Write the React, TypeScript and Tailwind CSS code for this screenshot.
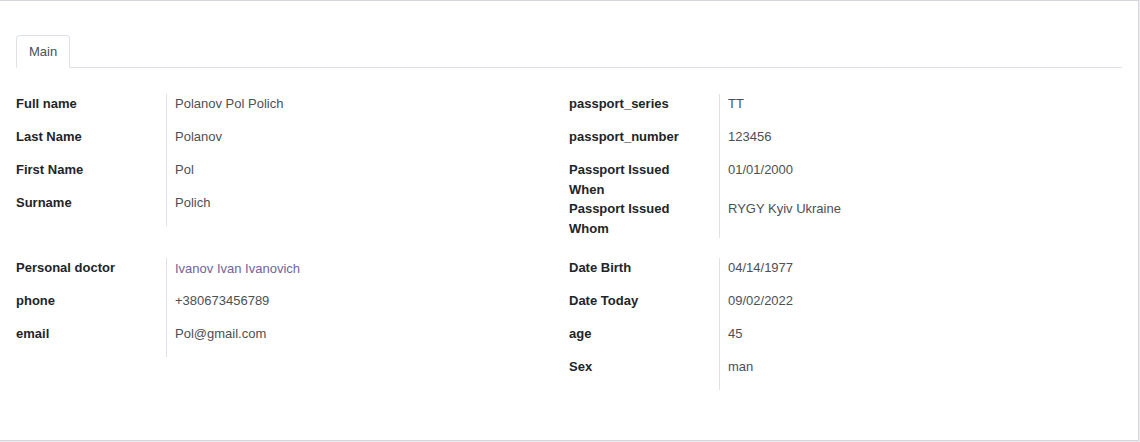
import type { ReactNode } from "react";

type Field = {
  label: string;
  value: ReactNode;
  link?: boolean;
};

const leftTop: Field[] = [
  { label: "Full name", value: "Polanov Pol Polich" },
  { label: "Last Name", value: "Polanov" },
  { label: "First Name", value: "Pol" },
  { label: "Surname", value: "Polich" },
];

const rightTop: Field[] = [
  { label: "passport_series", value: "TT" },
  { label: "passport_number", value: "123456" },
  { label: "Passport Issued When", value: "01/01/2000" },
  { label: "Passport Issued Whom", value: "RYGY Kyiv Ukraine" },
];

const leftBottom: Field[] = [
  { label: "Personal doctor", value: "Ivanov Ivan Ivanovich", link: true },
  { label: "phone", value: "+380673456789" },
  { label: "email", value: "Pol@gmail.com" },
];

const rightBottom: Field[] = [
  { label: "Date Birth", value: "04/14/1977" },
  { label: "Date Today", value: "09/02/2022" },
  { label: "age", value: "45" },
  { label: "Sex", value: "man" },
];

function FieldGroup({ fields }: { fields: Field[] }) {
  return (
    <div className="grid grid-cols-[150px_1fr] content-start">
      {fields.map((field) => (
        <div className="contents" key={field.label}>
          <div className="w-[110px] text-[13px] font-bold leading-[19.5px] text-[#212529]">
            {field.label}
          </div>
          <div
            className={
              field.link
                ? "min-h-[33px] border-l border-[#dee2e6] pl-2 pt-px text-[13px] leading-[19.5px] text-[#71639e]"
                : "min-h-[33px] border-l border-[#dee2e6] pl-2 text-[13px] leading-[19.5px] text-[#4c4f55]"
            }
          >
            {field.value}
          </div>
        </div>
      ))}
    </div>
  );
}

export default function App() {
  return (
    <div className="h-[442px] w-[1140px] bg-[#ecebf0] font-['Liberation_Sans',Arial,sans-serif]">
      <div className="h-[441px] w-[1139px] border-t border-r border-b border-[#d6d4dc] bg-white px-4 pt-[34px]">
        <div className="flex w-[1106px] border-b border-[#dee2e6]">
          <div className="-mb-px flex h-[33px] items-center rounded-t-[4px] border border-b-white border-[#dee2e6] bg-white px-3 text-[13px] text-[#495057]">
            Main
          </div>
        </div>
        <div className="mt-[26px] grid w-[1106px] grid-cols-2 items-start gap-y-5">
          <FieldGroup fields={leftTop} />
          <FieldGroup fields={rightTop} />
          <FieldGroup fields={leftBottom} />
          <FieldGroup fields={rightBottom} />
        </div>
      </div>
    </div>
  );
}
